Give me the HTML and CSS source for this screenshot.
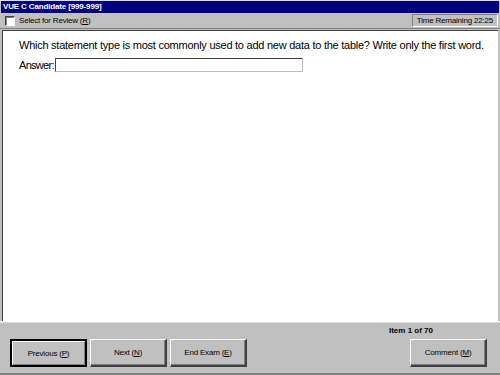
FILE: index.html
```html
<!DOCTYPE html>
<html>
<head>
<meta charset="utf-8">
<link rel="stylesheet" href="styles.css">
</head>
<body>
<div class="window">
  <div class="titlebar">VUE C Candidate [999-999]</div>
  <div class="toolbar">
    <label class="review"><span class="checkbox"></span><span class="review-text">Select for Review (<u>R</u>)</span></label>
    <div class="timer">Time Remaining 22:25</div>
  </div>
  <div class="content">
    <p class="question">Which statement type is most commonly used to add new data to the table? Write only the first word.</p>
    <div class="answer-row"><span class="answer-label">Answer:</span><span class="answer-input"></span></div>
  </div>
  <div class="footer">
    <div class="item-count">Item 1 of 70</div>
    <div class="buttons">
      <div class="btn default"><span>Previous (<u>P</u>)</span></div>
      <div class="btn"><span>Next (<u>N</u>)</span></div>
      <div class="btn"><span>End Exam (<u>E</u>)</span></div>
      <div class="spacer"></div>
      <div class="btn"><span>Comment (<u>M</u>)</span></div>
    </div>
  </div>
</div>
</body>
</html>
```
FILE: styles.css
```css
html, body {
  margin: 0;
  padding: 0;
  width: 500px;
  height: 375px;
  overflow: hidden;
  background: #c0c0c0;
  font-family: "Liberation Sans", Arial, sans-serif;
}
.window {
  width: 500px;
  height: 375px;
  display: flex;
  flex-direction: column;
  box-sizing: border-box;
  border-top: 1px solid #dfdfdf;
  border-bottom: 2px solid #808080;
  background: #c0c0c0;
}
.titlebar {
  height: 12px;
  background: #000080;
  color: #fff;
  font-weight: bold;
  font-size: 8px;
  letter-spacing: -0.15px;
  line-height: 12px;
  padding-left: 2px;
  margin: 0 1px;
}
.toolbar {
  height: 15px;
  display: flex;
  align-items: center;
  justify-content: space-between;
  padding: 0 2px 0 5px;
  border-bottom: 1px solid #808080;
  font-size: 8px;
  letter-spacing: -0.2px;
  color: #000;
}
.review {
  display: flex;
  align-items: center;
  gap: 4px;
}
.checkbox {
  width: 8px;
  height: 8px;
  background: #fff;
  border-top: 1px solid #404040;
  border-left: 1px solid #404040;
  border-right: 1px solid #fff;
  border-bottom: 1px solid #fff;
  box-shadow: inset 1px 1px 0 #808080;
}
.timer {
  padding: 1px 4px 1px 4px;
  border-top: 1px solid #808080;
  border-left: 1px solid #808080;
  border-right: 1px solid #fff;
  border-bottom: 1px solid #fff;
}
.content {
  flex: 1;
  background: #fff;
  margin: 1px 2px 0 2px;
  border-left: 1px solid #404040;
  border-top: 1px solid #404040;
  padding: 0 0 0 16px;
}
.question {
  margin: 7px 0 0 0;
  font-size: 11px;
  letter-spacing: -0.25px;
  line-height: 14px;
  color: #000;
  white-space: nowrap;
}
.answer-row {
  display: flex;
  align-items: center;
  margin-top: 6px;
  font-size: 11px;
  color: #000;
}
.answer-label {
  letter-spacing: -0.7px;
  margin-right: 1px;
}
.answer-input {
  width: 246px;
  height: 12px;
  border-top: 1px solid #404040;
  border-left: 1px solid #404040;
  border-right: 1px solid #c0c0c0;
  border-bottom: 1px solid #c0c0c0;
  background: #fff;
}
.footer {
  height: 51px;
  border-top: 1px solid #fff;
  box-shadow: inset 0 1px 0 #dfdfdf;
  padding: 0 13px 0 10px;
  display: flex;
  flex-direction: column;
}
.item-count {
  font-size: 8px;
  font-weight: bold;
  text-align: right;
  padding-right: 54px;
  margin-top: 4px;
  height: 10px;
  line-height: 10px;
}
.buttons {
  display: flex;
  gap: 3px;
  margin-top: 3px;
}
.spacer {
  flex: 1;
}
.btn {
  width: 74px;
  height: 25px;
  display: flex;
  align-items: center;
  justify-content: center;
  font-size: 8px;
  letter-spacing: -0.2px;
  color: #000;
  background: #c0c0c0;
  border-top: 1px solid #fff;
  border-left: 1px solid #fff;
  border-right: 2px solid #404040;
  border-bottom: 2px solid #404040;
  box-shadow: inset -1px -1px 0 #808080;
}
.btn.default {
  width: 73px;
  height: 24px;
  border: 2px solid #000;
  box-shadow: inset 1px 1px 0 #fff, inset -1px -1px 0 #808080;
}
```
